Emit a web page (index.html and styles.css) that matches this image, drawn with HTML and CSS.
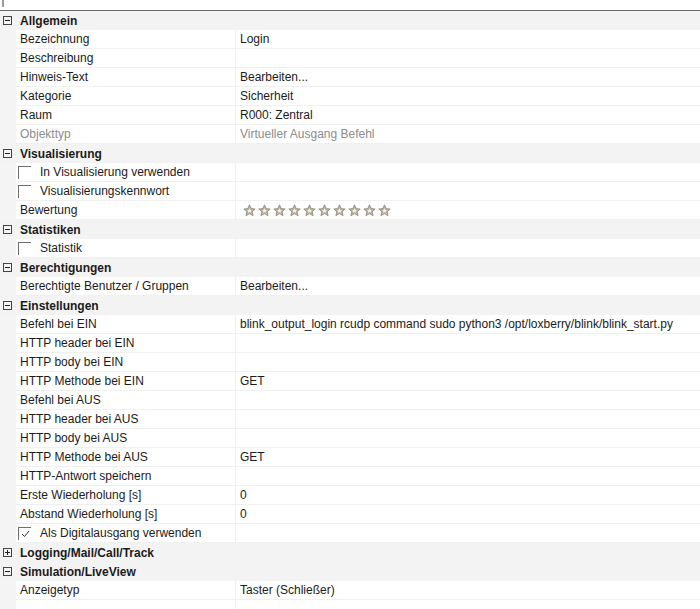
FILE: index.html
```html
<!DOCTYPE html>
<html lang="de">
<head>
    <meta charset="UTF-8">
    <title>Eigenschaften</title>
    <link rel="stylesheet" href="styles.css">
</head>
<body>
    <!-- top strip -->
    <div class="topbar"><span class="grip"></span></div>

    <div class="props">
        <!-- Allgemein -->
        <div class="cat"><span class="tog"><svg width="9" height="9" viewBox="0 0 9 9"><rect x="0.5" y="0.5" width="8" height="8" fill="none" stroke="#444"/><path d="M2 4.5h5" stroke="#222"/></svg></span><span class="cat-name">Allgemein</span></div>
        <div class="row"><span class="name">Bezeichnung</span><span class="val">Login</span></div>
        <div class="row"><span class="name">Beschreibung</span><span class="val"></span></div>
        <div class="row"><span class="name">Hinweis-Text</span><span class="val">Bearbeiten...</span></div>
        <div class="row"><span class="name">Kategorie</span><span class="val">Sicherheit</span></div>
        <div class="row"><span class="name">Raum</span><span class="val">R000: Zentral</span></div>
        <div class="row muted"><span class="name">Objekttyp</span><span class="val">Virtueller Ausgang Befehl</span></div>

        <!-- Visualisierung -->
        <div class="cat"><span class="tog"><svg width="9" height="9" viewBox="0 0 9 9"><rect x="0.5" y="0.5" width="8" height="8" fill="none" stroke="#444"/><path d="M2 4.5h5" stroke="#222"/></svg></span><span class="cat-name">Visualisierung</span></div>
        <div class="row"><span class="name"><span class="check"></span>In Visualisierung verwenden</span><span class="val"></span></div>
        <div class="row"><span class="name"><span class="check"></span>Visualisierungskennwort</span><span class="val"></span></div>
        <div class="row"><span class="name">Bewertung</span><span class="val stars" id="stars"></span></div>

        <!-- Statistiken -->
        <div class="cat"><span class="tog"><svg width="9" height="9" viewBox="0 0 9 9"><rect x="0.5" y="0.5" width="8" height="8" fill="none" stroke="#444"/><path d="M2 4.5h5" stroke="#222"/></svg></span><span class="cat-name">Statistiken</span></div>
        <div class="row"><span class="name"><span class="check"></span>Statistik</span><span class="val"></span></div>

        <!-- Berechtigungen -->
        <div class="cat"><span class="tog"><svg width="9" height="9" viewBox="0 0 9 9"><rect x="0.5" y="0.5" width="8" height="8" fill="none" stroke="#444"/><path d="M2 4.5h5" stroke="#222"/></svg></span><span class="cat-name">Berechtigungen</span></div>
        <div class="row"><span class="name">Berechtigte Benutzer / Gruppen</span><span class="val">Bearbeiten...</span></div>

        <!-- Einstellungen -->
        <div class="cat"><span class="tog"><svg width="9" height="9" viewBox="0 0 9 9"><rect x="0.5" y="0.5" width="8" height="8" fill="none" stroke="#444"/><path d="M2 4.5h5" stroke="#222"/></svg></span><span class="cat-name">Einstellungen</span></div>
        <div class="row"><span class="name">Befehl bei EIN</span><span class="val">blink_output_login rcudp command sudo python3 /opt/loxberry/blink/blink_start.py</span></div>
        <div class="row"><span class="name">HTTP header bei EIN</span><span class="val"></span></div>
        <div class="row"><span class="name">HTTP body bei EIN</span><span class="val"></span></div>
        <div class="row"><span class="name">HTTP Methode bei EIN</span><span class="val">GET</span></div>
        <div class="row"><span class="name">Befehl bei AUS</span><span class="val"></span></div>
        <div class="row"><span class="name">HTTP header bei AUS</span><span class="val"></span></div>
        <div class="row"><span class="name">HTTP body bei AUS</span><span class="val"></span></div>
        <div class="row"><span class="name">HTTP Methode bei AUS</span><span class="val">GET</span></div>
        <div class="row"><span class="name">HTTP-Antwort speichern</span><span class="val"></span></div>
        <div class="row"><span class="name">Erste Wiederholung [s]</span><span class="val">0</span></div>
        <div class="row"><span class="name">Abstand Wiederholung [s]</span><span class="val">0</span></div>
        <div class="row"><span class="name"><span class="check checked"><svg width="9" height="8" viewBox="0 0 9 8"><path d="M1 4l2.5 2.5L8 1" fill="none" stroke="#333" stroke-width="1"/></svg></span>Als Digitalausgang verwenden</span><span class="val"></span></div>

        <!-- Logging -->
        <div class="cat"><span class="tog"><svg width="9" height="9" viewBox="0 0 9 9"><rect x="0.5" y="0.5" width="8" height="8" fill="none" stroke="#444"/><path d="M2 4.5h5M4.5 2v5" stroke="#222"/></svg></span><span class="cat-name">Logging/Mail/Call/Track</span></div>

        <!-- Simulation -->
        <div class="cat"><span class="tog"><svg width="9" height="9" viewBox="0 0 9 9"><rect x="0.5" y="0.5" width="8" height="8" fill="none" stroke="#444"/><path d="M2 4.5h5" stroke="#222"/></svg></span><span class="cat-name">Simulation/LiveView</span></div>
        <div class="row"><span class="name">Anzeigetyp</span><span class="val">Taster (Schließer)</span></div>
        <div class="row"><span class="name"></span><span class="val"></span></div>
    </div>

<script>
    // 10 empty rating stars
    const starBox = document.getElementById('stars');
    const starSvg = '<svg class="star" width="13" height="13" viewBox="0 0 13 13">' +
        '<path d="M6.5 0.8l1.7 3.8 4 .4-3 2.7.9 4-3.6-2.1-3.6 2.1.9-4-3-2.7 4-.4z" fill="#b9b29f" stroke="#8f8774" stroke-width="0.8" stroke-linejoin="round"/>' +
        '<path d="M6.5 4.3l.8 1.6 1.6.2-1.2 1.1.4 1.7-1.6-.9-1.6.9.4-1.7-1.2-1.1 1.6-.2z" fill="#f4f1ea"/></svg>';
    for (let i = 0; i < 10; i++) {
        starBox.innerHTML += starSvg;
    }
</script>
</body>
</html>
```

FILE: styles.css
```css
body {
    margin: 0;
    font-family: "Liberation Sans", Arial, sans-serif;
    font-size: 12px;
    color: #1b1b1b;
    background: #fff;
    width: 700px;
    height: 609px;
    overflow: hidden;
}

.topbar {
    height: 10px;
    border-bottom: 1px solid #6a6a6a;
    position: relative;
}

.grip {
    position: absolute;
    left: 2px;
    top: 0;
    width: 2px;
    height: 7px;
    background: #9a9a9a;
}

.props {
    background: #f4f4f4;
}

.cat {
    display: flex;
    align-items: center;
    height: 19px;
    background: #f3f3f3;
}

.tog {
    width: 16px;
    display: flex;
    justify-content: center;
    padding-left: 0;
}

.tog svg {
    display: block;
    margin-left: -1px;
}

.cat-name {
    padding-left: 4px;
    font-weight: bold;
}

.row {
    display: grid;
    grid-template-columns: 219px 1fr;
    height: 19px;
    margin-left: 16px;
    background: #fff;
}

.row .name,
.row .val {
    display: flex;
    align-items: center;
    height: 18px;
    border-bottom: 1px solid #f0f0f0;
    white-space: nowrap;
    overflow: hidden;
}

.row .name {
    padding-left: 4px;
}

.row .val {
    padding-left: 4px;
    border-left: 1px solid #f0f0f0;
}

.muted {
    color: #8c8c8c;
}

.check {
    display: inline-flex;
    align-items: center;
    justify-content: center;
    width: 13px;
    height: 13px;
    box-sizing: border-box;
    border-top: 1px solid #6e6e6e;
    border-left: 1px solid #6e6e6e;
    margin-left: -2px;
    margin-right: 9px;
}

.check svg {
    display: block;
}

.stars {
    gap: 2px;
    padding-left: 7px !important;
}

.star {
    display: block;
    flex: none;
}
```
